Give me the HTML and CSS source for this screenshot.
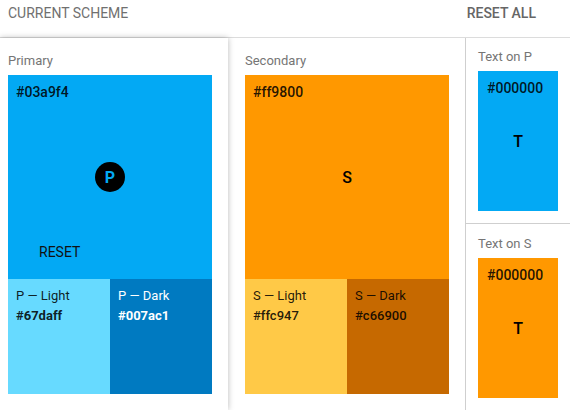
FILE: index.html
```html
<!DOCTYPE html>
<html>
<head>
<meta charset="utf-8">
<link rel="stylesheet" href="styles.css">
</head>
<body>
<header class="bar">
  <span class="bar-title">CURRENT SCHEME</span>
  <span class="bar-action">RESET ALL</span>
</header>
<main class="scheme">
  <section class="panel panel-primary">
    <div class="panel-label">Primary</div>
    <div class="swatch">
      <div class="swatch-main main-primary">
        <div class="hex top">#03a9f4</div>
        <div class="center"><span class="badge">P</span></div>
        <div class="bottom"><span class="reset">RESET</span></div>
      </div>
      <div class="variants">
        <div class="variant v-plight"><div>P — Light</div><div class="hex">#67daff</div></div>
        <div class="variant v-pdark"><div>P — Dark</div><div class="hex">#007ac1</div></div>
      </div>
    </div>
  </section>
  <section class="panel panel-secondary">
    <div class="panel-label">Secondary</div>
    <div class="swatch">
      <div class="swatch-main main-secondary">
        <div class="hex top">#ff9800</div>
        <div class="center"><span class="letter">S</span></div>
        <div class="bottom"></div>
      </div>
      <div class="variants">
        <div class="variant v-slight"><div>S — Light</div><div class="hex">#ffc947</div></div>
        <div class="variant v-sdark"><div>S — Dark</div><div class="hex">#c66900</div></div>
      </div>
    </div>
  </section>
  <section class="text-col">
    <div class="text-block">
      <div class="panel-label">Text on P</div>
      <div class="text-swatch ts-p">
        <div class="hex top">#000000</div>
        <div class="center"><span class="letter">T</span></div>
        <div></div>
      </div>
    </div>
    <div class="text-block second">
      <div class="panel-label">Text on S</div>
      <div class="text-swatch ts-s">
        <div class="hex top">#000000</div>
        <div class="center"><span class="letter">T</span></div>
        <div></div>
      </div>
    </div>
  </section>
</main>
</body>
</html>
```
FILE: styles.css
```css
* { box-sizing: border-box; }
html, body { margin: 0; padding: 0; background: #fff; }
body {
  font-family: Roboto, "Noto Sans", sans-serif;
  font-size: 13px;
  color: rgba(0,0,0,0.87);
  width: 570px;
  height: 410px;
  overflow: hidden;
}
.bar {
  height: 38px;
  border-bottom: 1px solid #dcdcdc;
  display: flex;
  align-items: flex-start;
  justify-content: space-between;
  padding: 5px 34px 0 8px;
  font-size: 14px;
  line-height: 16px;
}
.bar-title { color: #707070; }
.bar-action { color: #666; font-weight: 500; }
.scheme {
  display: flex;
  height: 372px;
}
.panel {
  padding-top: 15px;
}
.panel-primary {
  width: 228px;
  padding-left: 8px;
  background: #fff;
  position: relative;
  z-index: 1;
  box-shadow: 0 0 6px rgba(0,0,0,0.28);
}
.panel-secondary {
  width: 238px;
  padding-left: 17px;
  border-right: 1px solid #cfcfcf;
}
.panel-label {
  color: #757575;
  line-height: 15px;
  margin-bottom: 7px;
}
.swatch {
  width: 204px;
  display: flex;
  flex-direction: column;
}
.hex { font-weight: 500; line-height: 20px; }
.hex.top { padding-top: 7px; font-size: 14px; }
.swatch-main {
  height: 204px;
  display: grid;
  grid-template-rows: minmax(0,1fr) auto minmax(0,1fr);
  padding: 0 8px;
}
.main-primary { background: #03a9f4; }
.main-secondary { background: #ff9800; }
.center { display: flex; justify-content: center; align-items: center; }
.badge {
  width: 30px;
  height: 30px;
  border-radius: 50%;
  background: #000;
  color: #03a9f4;
  font-weight: 700;
  font-size: 16px;
  display: flex;
  align-items: center;
  justify-content: center;
}
.letter { font-size: 16px; font-weight: 500; color: #000; }
.bottom { display: flex; align-items: flex-end; }
.reset {
  color: #111;
  font-size: 14px;
  line-height: 16px;
  margin: 0 0 19px 23px;
}
.variants { display: flex; height: 115px; }
.variant {
  flex: 1;
  padding: 7px 8px;
  line-height: 20px;
}
.v-plight .hex, .v-pdark .hex { font-weight: 700; }
.v-plight { background: #67daff; }
.v-pdark { background: #007ac1; color: #fff; }
.v-slight { background: #ffc947; }
.v-sdark { background: #c66900; }
.text-col {
  width: 104px;
  display: flex;
  flex-direction: column;
}
.text-block {
  padding: 11px 0 12px 12px;
  border-bottom: 1px solid #cfcfcf;
}
.text-block.second { border-bottom: none; padding-top: 12px; }
.text-swatch {
  width: 80px;
  height: 140px;
  padding: 0 0 0 9px;
  display: grid;
  grid-template-rows: minmax(0,1fr) auto minmax(0,1fr);
}
.text-swatch .center { padding-right: 9px; }
.ts-p { background: #03a9f4; }
.ts-s { background: #ff9800; }
```
